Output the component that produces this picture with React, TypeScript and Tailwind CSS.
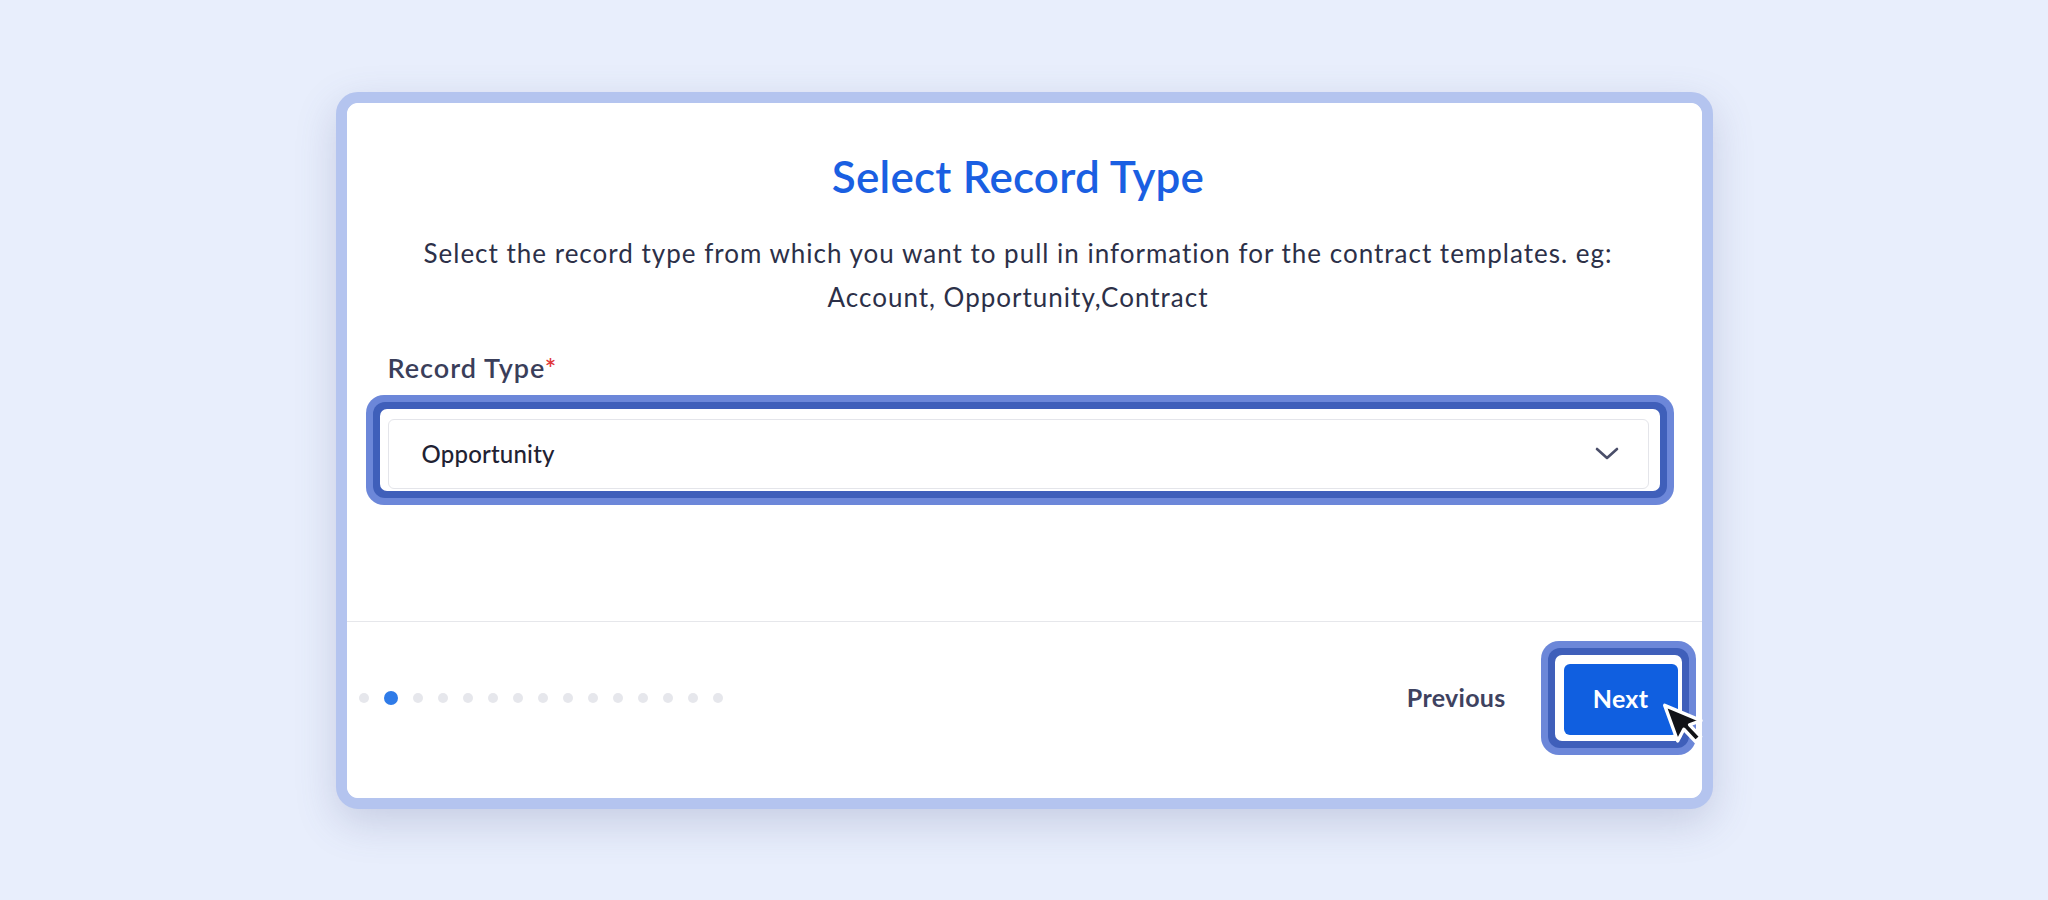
function Chevron() {
  return (
    <svg className="block h-[14px] w-[24px]" viewBox="0 0 24 14" fill="none">
      <path d="M2 2 L12 11 L22 2" stroke="#4a4e69" strokeWidth="2.6" strokeLinecap="round" strokeLinejoin="round" />
    </svg>
  );
}

function Cursor() {
  return (
    <svg className="pointer-events-none absolute left-[119px] top-[61px] h-[58px] w-[54px]" viewBox="0 0 24 26" fill="none">
      <g transform="translate(2 1.5) rotate(-20)">
        <path
          d="M0 0 L0 17 L4.4 13 L7.4 20 L10.4 18.7 L7.5 12 L13 12 Z"
          fill="#111217"
          stroke="white"
          strokeWidth="1.5"
          strokeLinejoin="round"
        />
      </g>
    </svg>
  );
}

function Dots() {
  const total = 15;
  const active = 1;
  return (
    <div className="flex items-center gap-[15px]">
      {Array.from({ length: total }).map((_, i) =>
        i === active ? (
          <div key={i} className="size-[14px] rounded-full bg-[#2f7be8]" />
        ) : (
          <div key={i} className="size-[10px] rounded-full bg-[#e6e7ec]" />
        )
      )}
    </div>
  );
}

function RecordSelect() {
  return (
    <div className="-ml-[22px] -mr-[25px] rounded-[18px] bg-[#6c87d9] p-[7px]">
      <div className="rounded-[12px] bg-[#3f5fba] p-[7px]">
        <div className="rounded-[7px] bg-white pl-[8px] pr-[11px] pt-[10px] pb-[2px]">
          <div className="flex h-[70px] items-center justify-between rounded-[6px] border-[1.5px] border-[#e4e5ea] pl-[33px] pr-[29px]">
            <span className="text-[24px] font-medium tracking-[0.2px] text-[#1f2233]">Opportunity</span>
            <Chevron />
          </div>
        </div>
      </div>
    </div>
  );
}

function NextButton() {
  return (
    <div className="relative">
      <div className="rounded-[18px] bg-[#6c87d9] p-[7px]">
        <div className="rounded-[12px] bg-[#3f5fba] p-[7px]">
          <div className="rounded-[7px] bg-white pl-[9px] pt-[9px] pr-[4px] pb-[6px]">
            <button className="flex h-[71px] w-[114px] items-center justify-center rounded-[6px] bg-[#105fe0] text-[25px] font-bold tracking-[0.3px] text-white">
              Next
            </button>
          </div>
        </div>
      </div>
      <Cursor />
    </div>
  );
}

export default function App() {
  return (
    <div className="flex min-h-[900px] items-center justify-center bg-[#e8eefc] font-['Lato',sans-serif]">
      <div className="w-[1377px] rounded-[22px] border-[11px] border-[#b4c4ef] bg-white shadow-[0_14px_40px_rgba(80,92,140,0.22)]">
        <div className="rounded-[12px] bg-white">
          <div className="flex flex-col pl-[41px] pr-[53px] pt-[49px] pb-[116px]">
            <h1 className="text-center text-[44px] font-semibold leading-[48px] tracking-[0.2px] text-[#1a5fe2]">Select Record Type</h1>
            <p className="mt-[31px] text-center text-[26px] leading-[44px] tracking-[1px] text-[#2c3048]">
              Select the record type from which you want to pull in information for the contract templates. eg:
              <br />
              Account, Opportunity,Contract
            </p>
            <label className="mt-[34px] mb-[12px] text-[27px] font-semibold leading-[30px] tracking-[1px] text-[#3a3e5a]">
              Record Type<span className="text-[#e0383a]">*</span>
            </label>
            <RecordSelect />
          </div>
          <div className="h-px bg-[#e6e7eb]" />
          <div className="flex items-center justify-between pl-[12px] pr-[6px] pt-[19px] pb-[43px]">
            <Dots />
            <div className="flex items-center gap-[35px]">
              <button className="text-[25px] font-bold tracking-[0.3px] text-[#3e4260]">Previous</button>
              <NextButton />
            </div>
          </div>
        </div>
      </div>
    </div>
  );
}
